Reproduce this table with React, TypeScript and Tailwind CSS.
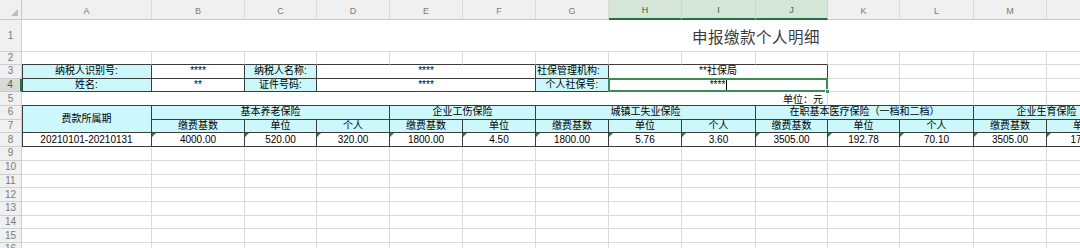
import React from "react";

const F = "font-['Liberation_Sans','Noto_Sans_CJK_SC',sans-serif]";

type P = { children?: React.ReactNode; cls?: string };

// grey grid cell
const G = ({ children, cls = "" }: P) => (
  <div className={"flex items-center justify-center border-r border-b border-[#dadada] " + cls}>{children}</div>
);

// dark bordered table cell
const D = ({ children, cls = "" }: P) => (
  <div className={"relative flex items-center justify-center whitespace-nowrap border-r border-b border-[#3c3c3c] text-black " + cls}>
    {children}
  </div>
);

const Tri = () => (
  <span className="absolute left-0 top-0 border-t-[4px] border-r-[4px] border-t-[#2a7d3f] border-r-transparent" />
);

const N = ({ children, cls = "" }: P) => (
  <D cls={cls}>
    <Tri />
    {children}
  </D>
);

const RH = ({ n, active = false }: { n: number; active?: boolean }) => (
  <div
    className={
      active
        ? "flex items-center justify-center border-b border-[#c8c8c8] border-r-2 border-r-[#217346] bg-[#d9d9d9] text-[10px] text-[#217346]"
        : "flex items-center justify-center border-b border-r border-[#cfcfcf] bg-[#f0f0f0] text-[10px] text-[#7a7a7a]"
    }
  >
    {n}
  </div>
);

const CH = ({ l, sel = false }: { l: string; sel?: boolean }) => (
  <div
    className={
      sel
        ? "flex items-center justify-center pt-[3px] bg-[#d5e6d9] border-r border-[#c9d9cc] border-b-2 border-b-[#217346] text-[9px] text-[#2d6a3e]"
        : "flex items-center justify-center pt-[3px] bg-[#f0f0f0] border-r border-[#dadada] border-b border-b-[#c8c8c8] text-[9px] text-[#7a7a7a]"
    }
  >
    {l}
  </div>
);

const cyan = "bg-[#cdf8fb]";

const Blank = () => (
  <>
    <G />
    <G />
    <G />
    <G />
    <G />
    <G />
    <G />
    <G />
    <G />
    <G />
    <G />
    <G />
    <G />
    <G />
  </>
);

export default function App() {
  const letters = ["A", "B", "C", "D", "E", "F", "G", "H", "I", "J", "K", "L", "M", "N"];
  return (
    <div className={"w-[1080px] h-[248px] overflow-hidden bg-white text-[10px] leading-none " + F}>
      <div className="grid w-max grid-cols-[22px_130px_93px_72px_73px_73px_73px_73px_73px_74px_72px_72px_74px_73px_73px] grid-rows-[20px_32px_13px_repeat(14,13.7px)]">
        {/* header row */}
        <div className="relative bg-[#f0f0f0] border-r border-b border-[#c8c8c8]">
          <svg className="absolute right-[3px] bottom-[3px]" width="7" height="7" viewBox="0 0 7 7">
            <polygon points="7,0 7,7 0,7" fill="#bdbdbd" />
          </svg>
        </div>
        {letters.map((l) => (
          <CH key={l} l={l} sel={l === "H" || l === "I" || l === "J"} />
        ))}

        {/* row 1 */}
        <RH n={1} />
        <div className="col-span-14 flex items-center border-b border-[#dadada] pl-[670px] pt-[2px]">
          <span className="font-['Noto_Sans_CJK_SC',sans-serif] text-[15.5px] tracking-[0.5px] text-[#3a3a3a]">申报缴款个人明细</span>
        </div>

        {/* row 2 */}
        <RH n={2} />
        <div className="border-r border-[#dadada] border-b border-b-[#3c3c3c]" />
        <div className="border-r border-[#dadada] border-b border-b-[#3c3c3c]" />
        <div className="border-r border-[#dadada] border-b border-b-[#3c3c3c]" />
        <div className="border-r border-[#dadada] border-b border-b-[#3c3c3c]" />
        <div className="border-r border-[#dadada] border-b border-b-[#3c3c3c]" />
        <div className="border-r border-[#dadada] border-b border-b-[#3c3c3c]" />
        <div className="border-r border-[#dadada] border-b border-b-[#3c3c3c]" />
        <div className="border-r border-[#dadada] border-b border-b-[#3c3c3c]" />
        <div className="border-r border-[#dadada] border-b border-b-[#3c3c3c]" />
        <div className="border-r border-[#dadada] border-b border-b-[#3c3c3c]" />
        <G />
        <G />
        <G />
        <G />

        {/* row 3 */}
        <RH n={3} />
        <D cls={cyan + " shadow-[inset_1px_0_0_#3c3c3c]"}>纳税人识别号:</D>
        <D>****</D>
        <D cls={cyan}>纳税人名称:</D>
        <D cls="col-span-3">****</D>
        <D cls={cyan + " justify-start pl-px"}>社保管理机构:</D>
        <D cls="col-span-3">**社保局</D>
        <G />
        <G />
        <G />
        <G />

        {/* row 4 */}
        <RH n={4} active />
        <D cls={cyan + " shadow-[inset_1px_0_0_#3c3c3c]"}>姓名:</D>
        <D>**</D>
        <D cls={cyan}>证件号码:</D>
        <D cls="col-span-3">****</D>
        <D cls={cyan}>个人社保号:</D>
        <D cls="col-span-3">
          <span className="pl-[1px]">****</span>
          <span className="ml-px h-full w-px bg-black" />
          <span className="absolute -left-px -top-px -right-px -bottom-px border-2 border-[#3f8a55]" />
          <span className="absolute -right-[3px] -bottom-[3px] h-[5px] w-[5px] bg-[#3f8a55] border border-white" />
        </D>
        <G />
        <G />
        <G />
        <G />

        {/* row 5 */}
        <RH n={5} />
        <div className="col-span-10 flex items-center justify-end pr-[4px] pt-[2px] border-r border-[#dadada] border-b border-b-[#3c3c3c] text-black">
          单位：元
        </div>
        <div className="border-r border-[#dadada] border-b border-b-[#3c3c3c]" />
        <div className="border-r border-[#dadada] border-b border-b-[#3c3c3c]" />
        <div className="border-r border-[#dadada] border-b border-b-[#3c3c3c]" />
        <div className="border-r border-[#dadada] border-b border-b-[#3c3c3c]" />

        {/* row 6 */}
        <RH n={6} />
        <D cls={cyan + " row-span-2 shadow-[inset_1px_0_0_#3c3c3c]"}>费款所属期</D>
        <D cls={cyan + " col-span-3"}>基本养老保险</D>
        <D cls={cyan + " col-span-2"}>企业工伤保险</D>
        <D cls={cyan + " col-span-3"}>城镇工失业保险</D>
        <D cls={cyan + " col-span-3"}>在职基本医疗保险（一档和二档）</D>
        <D cls={cyan + " col-span-2"}>企业生育保险</D>

        {/* row 7 */}
        <RH n={7} />
        <D cls={cyan}>缴费基数</D>
        <D cls={cyan}>单位</D>
        <D cls={cyan}>个人</D>
        <D cls={cyan}>缴费基数</D>
        <D cls={cyan}>单位</D>
        <D cls={cyan}>缴费基数</D>
        <D cls={cyan}>单位</D>
        <D cls={cyan}>个人</D>
        <D cls={cyan}>缴费基数</D>
        <D cls={cyan}>单位</D>
        <D cls={cyan}>个人</D>
        <D cls={cyan}>缴费基数</D>
        <D cls={cyan}>单位</D>

        {/* row 8 */}
        <RH n={8} />
        <D cls="shadow-[inset_1px_0_0_#3c3c3c]">20210101-20210131</D>
        <N>4000.00</N>
        <N>520.00</N>
        <N>320.00</N>
        <N>1800.00</N>
        <N>4.50</N>
        <N>1800.00</N>
        <N>5.76</N>
        <N>3.60</N>
        <N>3505.00</N>
        <N>192.78</N>
        <N>70.10</N>
        <N>3505.00</N>
        <N>17.53</N>

        {/* rows 9-16 */}
        {[9, 10, 11, 12, 13, 14, 15, 16].map((n) => (
          <React.Fragment key={n}>
            <RH n={n} />
            <Blank />
          </React.Fragment>
        ))}
      </div>
    </div>
  );
}
